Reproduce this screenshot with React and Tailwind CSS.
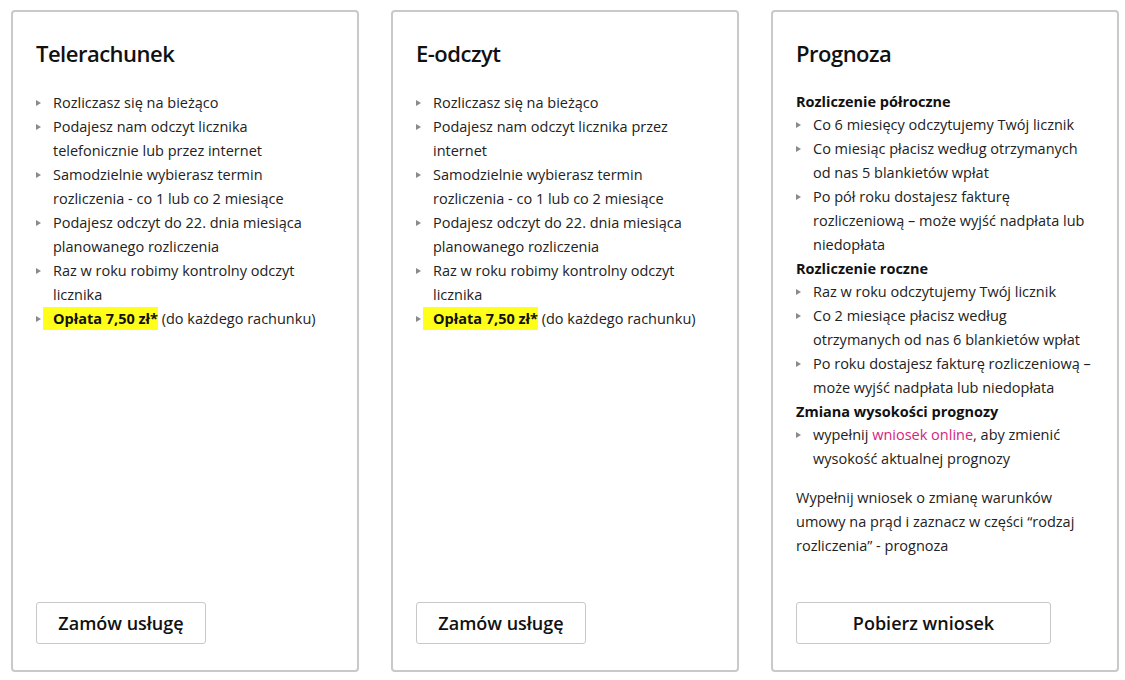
import React from "react";

const font = { fontFamily: '"Open Sans", "Noto Sans", sans-serif' };

function Bullet() {
  return (
    <span className="absolute left-0 top-[9px] w-0 h-0 border-l-[5px] border-l-[#8a8a8a] border-y-[3.5px] border-y-transparent" />
  );
}

function Item({ children }) {
  return (
    <li className="relative pl-[17px] leading-[24px]">
      <Bullet />
      {children}
    </li>
  );
}

function Fee() {
  return (
    <Item>
      <span className="bg-[#ffff1a] -ml-[10px] pl-[10px] py-[2px] font-bold text-[#111]">Opłata 7,50 zł*</span> (do każdego rachunku)
    </Item>
  );
}

function Card({ title, children, button, buttonW }) {
  return (
    <div className="w-[348px] h-[662px] shrink-0 border-2 border-[#c9c9c9] rounded-[4px] bg-white flex flex-col pl-[23px] pr-[22px] pt-[26px] pb-[26px]">
      <h2 className="text-[22px] leading-[30px] font-semibold text-[#111] tracking-[-0.5px]">{title}</h2>
      <div className="flex-1 text-[14.5px] text-[#222]">{children}</div>
      <button className={`${buttonW} h-[42px] border border-[#c8c8c8] rounded-[3px] bg-white text-[18px] font-semibold text-[#111]`}>
        {button}
      </button>
    </div>
  );
}

export default function App() {
  return (
    <div className="w-[1125px] h-[680px] bg-white flex gap-[32px] pl-[11px] pt-[10px]" style={font}>
      <Card title="Telerachunek" button="Zamów usługę" buttonW="w-[170px]">
        <ul className="mt-[23px]">
          <Item>Rozliczasz się na bieżąco</Item>
          <Item>Podajesz nam odczyt licznika telefonicznie lub przez internet</Item>
          <Item>Samodzielnie wybierasz termin rozliczenia - co 1 lub co 2 miesiące</Item>
          <Item>Podajesz odczyt do 22. dnia miesiąca planowanego rozliczenia</Item>
          <Item>Raz w roku robimy kontrolny odczyt licznika</Item>
          <Fee />
        </ul>
      </Card>
      <Card title="E-odczyt" button="Zamów usługę" buttonW="w-[170px]">
        <ul className="mt-[23px]">
          <Item>Rozliczasz się na bieżąco</Item>
          <Item>Podajesz nam odczyt licznika przez internet</Item>
          <Item>Samodzielnie wybierasz termin rozliczenia - co 1 lub co 2 miesiące</Item>
          <Item>Podajesz odczyt do 22. dnia miesiąca planowanego rozliczenia</Item>
          <Item>Raz w roku robimy kontrolny odczyt licznika</Item>
          <Fee />
        </ul>
      </Card>
      <Card title="Prognoza" button="Pobierz wniosek" buttonW="w-[255px]">
        <div className="mt-[22px]">
          <p className="font-bold leading-[23px] text-[#111]">Rozliczenie półroczne</p>
          <ul>
            <Item>Co 6 miesięcy odczytujemy Twój licznik</Item>
            <Item>Co miesiąc płacisz według otrzymanych od nas 5 blankietów wpłat</Item>
            <Item>Po pół roku dostajesz fakturę rozliczeniową – może wyjść nadpłata lub niedopłata</Item>
          </ul>
          <p className="font-bold leading-[23px] text-[#111]">Rozliczenie roczne</p>
          <ul>
            <Item>Raz w roku odczytujemy Twój licznik</Item>
            <Item>Co 2 miesiące płacisz według otrzymanych od nas 6 blankietów wpłat</Item>
            <Item>Po roku dostajesz fakturę rozliczeniową – może wyjść nadpłata lub niedopłata</Item>
          </ul>
          <p className="font-bold leading-[23px] text-[#111]">Zmiana wysokości prognozy</p>
          <ul>
            <Item>
              wypełnij <span className="text-[#d6257f]">wniosek online</span>, aby zmienić wysokość aktualnej prognozy
            </Item>
          </ul>
          <p className="mt-[15px] leading-[24px]">
            Wypełnij wniosek o zmianę warunków umowy na prąd i zaznacz w części “rodzaj rozliczenia” - prognoza
          </p>
        </div>
      </Card>
    </div>
  );
}
